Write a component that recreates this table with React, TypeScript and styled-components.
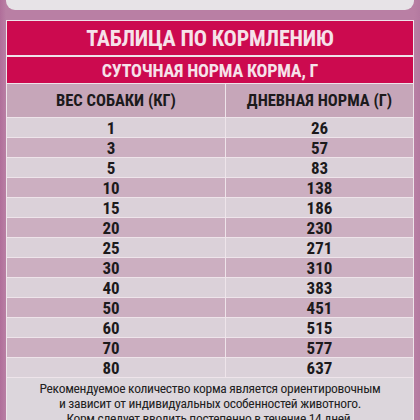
import React from "react";
import styled, { createGlobalStyle } from "styled-components";

const Global = createGlobalStyle`
  html, body { margin: 0; padding: 0; background: #b5779f; }
  body { width: 420px; height: 420px; overflow: hidden; }
`;

const Page = styled.div`
  width: 420px;
  height: 420px;
  box-sizing: border-box;
  padding: 0 6px;
  display: flex;
  flex-direction: column;
  gap: 10px;
  background: linear-gradient(90deg, #b06e9a 0px, #b97fa4 6px, #b97fa4 414px, #b47aa0 420px);
  overflow: hidden;
  font-family: "Liberation Sans Narrow", "Roboto Condensed", "Roboto", sans-serif;
`;

const TopCard = styled.div`
  height: 10px;
  flex: none;
  background: #e7e3e7;
  border-radius: 0 0 9px 9px;
`;

const Table = styled.div`
  flex: 1;
  display: grid;
  grid-template-columns: 218px 1fr;
  gap: 1px;
  background: #eee4ea;
  border: 1px solid #eee4ea;
  border-bottom: none;
  align-content: start;
`;

const Banner = styled.div<{ $h: number; $size: number; $after?: number }>`
  grid-column: 1 / -1;
  height: ${(p) => p.$h}px;
  margin-bottom: ${(p) => p.$after ?? 0}px;
  background: #cc0a4f;
  color: #f6e2ea;
  display: flex;
  align-items: center;
  justify-content: center;
  font-weight: 700;
  font-size: ${(p) => p.$size}px;
  letter-spacing: -0.2px;
`;

const Cell = styled.div<{ $tone: "head" | "light" | "dark"; $shift?: number }>`
  height: ${(p) => (p.$tone === "head" ? 33 : 19)}px;
  background: ${(p) =>
    p.$tone === "head" ? "#c6a6b9" : p.$tone === "dark" ? "#ccafc1" : "#dbd1d9"};
  color: #1c1a1c;
  display: flex;
  align-items: center;
  justify-content: center;
  font-weight: 700;
  font-size: ${(p) => (p.$tone === "head" ? 16.5 : 17)}px;
  padding-right: ${(p) => p.$shift ?? 0}px;
`;

const Footer = styled.div`
  grid-column: 1 / -1;
  background: #dcd6dc;
  color: #222;
  font-size: 13.5px;
  letter-spacing: -0.3px;
  line-height: 15px;
  text-align: center;
  padding-top: 3px;
  height: 60px;
`;

const rows: [string, string][] = [
  ["1", "26"],
  ["3", "57"],
  ["5", "83"],
  ["10", "138"],
  ["15", "186"],
  ["20", "230"],
  ["25", "271"],
  ["30", "310"],
  ["40", "383"],
  ["50", "451"],
  ["60", "515"],
  ["70", "577"],
  ["80", "637"],
];

export default function App() {
  return (
    <>
      <Global />
      <Page>
        <TopCard />
        <Table>
          <Banner $h={34} $size={22} $after={1}>ТАБЛИЦА ПО КОРМЛЕНИЮ</Banner>
          <Banner $h={26} $size={18}>СУТОЧНАЯ НОРМА КОРМА, Г</Banner>
          <Cell $tone="head">ВЕС СОБАКИ (КГ)</Cell>
          <Cell $tone="head">ДНЕВНАЯ НОРМА (Г)</Cell>
          {rows.map(([w, g], i) => (
            <React.Fragment key={w}>
              <Cell $tone={i % 2 ? "dark" : "light"} $shift={10}>{w}</Cell>
              <Cell $tone={i % 2 ? "dark" : "light"}>{g}</Cell>
            </React.Fragment>
          ))}
          <Footer>
            Рекомендуемое количество корма является ориентировочным
            <br />
            и зависит от индивидуальных особенностей животного.
            <br />
            Корм следует вводить постепенно в течение 14 дней.
          </Footer>
        </Table>
      </Page>
    </>
  );
}
